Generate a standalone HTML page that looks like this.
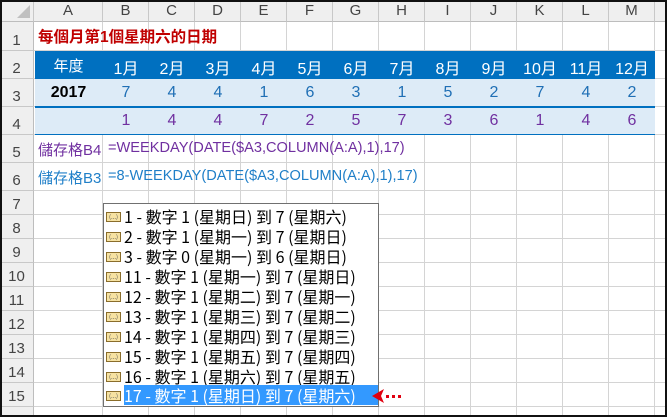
<!DOCTYPE html>
<html><head><meta charset="utf-8"><style>
*{margin:0;padding:0;box-sizing:border-box}
body{width:667px;height:417px;overflow:hidden;background:#fff;font-family:"Liberation Sans","Noto Sans CJK TC",sans-serif;position:relative}
.a{position:absolute}
.vl{position:absolute;top:0;width:1px;background:#d4d4d4;height:417px}
.hl{position:absolute;left:0;height:1px;background:#d4d4d4;width:667px}
.ch{position:absolute;top:0;height:22px;line-height:22px;text-align:center;font-size:15px;color:#444;background:#efefef;border-right:1px solid #c8c8c8;border-bottom:1px solid #bdbdbd}
.rh{position:absolute;left:0;width:34px;text-align:center;font-size:15px;color:#444;background:#efefef;border-right:1px solid #bdbdbd;border-bottom:1px solid #c8c8c8}
.c{position:absolute;width:46px;text-align:center;font-size:16px}
.dd{font-family:"WenQuanYi Zen Hei","Noto Sans CJK TC",sans-serif;font-size:16px;color:#000}
.it{position:absolute;left:2px;height:20px;line-height:20px;white-space:nowrap}
.ic{display:inline-block;width:15px;height:10px;border:1px solid #8a6d2b;background:#f6e2a2;vertical-align:middle;margin-right:3px;margin-top:-3px;font-size:6px;line-height:8px;text-align:center;color:#555}
</style></head><body>
<div class="vl" style="left:102px"></div><div class="vl" style="left:148px"></div><div class="vl" style="left:194px"></div><div class="vl" style="left:240px"></div><div class="vl" style="left:286px"></div><div class="vl" style="left:332px"></div><div class="vl" style="left:378px"></div><div class="vl" style="left:424px"></div><div class="vl" style="left:470px"></div><div class="vl" style="left:516px"></div><div class="vl" style="left:562px"></div><div class="vl" style="left:608px"></div><div class="vl" style="left:654px"></div>
<div class="hl" style="top:50px"></div><div class="hl" style="top:78px"></div><div class="hl" style="top:106px"></div><div class="hl" style="top:134px"></div><div class="hl" style="top:162px"></div><div class="hl" style="top:190px"></div><div class="hl" style="top:214px"></div><div class="hl" style="top:238px"></div><div class="hl" style="top:262px"></div><div class="hl" style="top:286px"></div><div class="hl" style="top:310px"></div><div class="hl" style="top:334px"></div><div class="hl" style="top:358px"></div><div class="hl" style="top:382px"></div><div class="hl" style="top:406px"></div>
<div class="ch" style="left:0;width:34px"><div class="a" style="right:3px;bottom:3px;width:0;height:0;border-left:13px solid transparent;border-bottom:13px solid #c0c0c0"></div></div>
<div class="ch" style="left:34px;width:69px">A</div>
<div class="ch" style="left:103px;width:46px">B</div><div class="ch" style="left:149px;width:46px">C</div><div class="ch" style="left:195px;width:46px">D</div><div class="ch" style="left:241px;width:46px">E</div><div class="ch" style="left:287px;width:46px">F</div><div class="ch" style="left:333px;width:46px">G</div><div class="ch" style="left:379px;width:46px">H</div><div class="ch" style="left:425px;width:46px">I</div><div class="ch" style="left:471px;width:46px">J</div><div class="ch" style="left:517px;width:46px">K</div><div class="ch" style="left:563px;width:46px">L</div><div class="ch" style="left:609px;width:46px">M</div><div class="ch" style="left:655px;width:12px"></div>
<div class="rh" style="top:22px;height:29px;line-height:38px">1</div>
<div class="rh" style="top:51px;height:28px;line-height:36px">2</div>
<div class="rh" style="top:79px;height:28px;line-height:36px">3</div>
<div class="rh" style="top:107px;height:28px;line-height:36px">4</div>
<div class="rh" style="top:135px;height:28px;line-height:36px">5</div>
<div class="rh" style="top:163px;height:28px;line-height:36px">6</div>
<div class="rh" style="top:191px;height:24px;line-height:28px">7</div>
<div class="rh" style="top:215px;height:24px;line-height:28px">8</div>
<div class="rh" style="top:239px;height:24px;line-height:28px">9</div>
<div class="rh" style="top:263px;height:24px;line-height:28px">10</div>
<div class="rh" style="top:287px;height:24px;line-height:28px">11</div>
<div class="rh" style="top:311px;height:24px;line-height:28px">12</div>
<div class="rh" style="top:335px;height:24px;line-height:28px">13</div>
<div class="rh" style="top:359px;height:24px;line-height:28px">14</div>
<div class="rh" style="top:383px;height:24px;line-height:28px">15</div>
<div class="rh" style="top:407px;height:10px"></div>
<div class="a" style="left:38px;top:25px;font-size:15.5px;font-weight:bold;color:#c00000">每個月第1個星期六的日期</div>
<div class="a" style="left:35px;top:51px;width:620px;height:28px;background:#0070c0"></div>
<div class="a" style="left:35px;top:79px;width:620px;height:56px;background:#ddebf7"></div>
<div class="a" style="left:35px;top:106px;width:620px;height:2px;background:#0070c0"></div>
<div class="a" style="left:35px;top:134px;width:620px;height:1px;background:#0070c0"></div>
<div class="a" style="left:34px;top:55px;width:69px;text-align:center;color:#fff;font-size:15px">年度</div>
<div class="a" style="left:34px;top:84px;width:69px;text-align:center;color:#000;font-size:16px;font-weight:bold">2017</div>
<div class="c" style="left:103px;top:55px;color:#fff">1月</div><div class="c" style="left:149px;top:55px;color:#fff">2月</div><div class="c" style="left:195px;top:55px;color:#fff">3月</div><div class="c" style="left:241px;top:55px;color:#fff">4月</div><div class="c" style="left:287px;top:55px;color:#fff">5月</div><div class="c" style="left:333px;top:55px;color:#fff">6月</div><div class="c" style="left:379px;top:55px;color:#fff">7月</div><div class="c" style="left:425px;top:55px;color:#fff">8月</div><div class="c" style="left:471px;top:55px;color:#fff">9月</div><div class="c" style="left:517px;top:55px;color:#fff">10月</div><div class="c" style="left:563px;top:55px;color:#fff">11月</div><div class="c" style="left:609px;top:55px;color:#fff">12月</div>
<div class="c" style="left:103px;top:84px;color:#1f6fb5">7</div><div class="c" style="left:149px;top:84px;color:#1f6fb5">4</div><div class="c" style="left:195px;top:84px;color:#1f6fb5">4</div><div class="c" style="left:241px;top:84px;color:#1f6fb5">1</div><div class="c" style="left:287px;top:84px;color:#1f6fb5">6</div><div class="c" style="left:333px;top:84px;color:#1f6fb5">3</div><div class="c" style="left:379px;top:84px;color:#1f6fb5">1</div><div class="c" style="left:425px;top:84px;color:#1f6fb5">5</div><div class="c" style="left:471px;top:84px;color:#1f6fb5">2</div><div class="c" style="left:517px;top:84px;color:#1f6fb5">7</div><div class="c" style="left:563px;top:84px;color:#1f6fb5">4</div><div class="c" style="left:609px;top:84px;color:#1f6fb5">2</div>
<div class="c" style="left:103px;top:112px;color:#7030a0">1</div><div class="c" style="left:149px;top:112px;color:#7030a0">4</div><div class="c" style="left:195px;top:112px;color:#7030a0">4</div><div class="c" style="left:241px;top:112px;color:#7030a0">7</div><div class="c" style="left:287px;top:112px;color:#7030a0">2</div><div class="c" style="left:333px;top:112px;color:#7030a0">5</div><div class="c" style="left:379px;top:112px;color:#7030a0">7</div><div class="c" style="left:425px;top:112px;color:#7030a0">3</div><div class="c" style="left:471px;top:112px;color:#7030a0">6</div><div class="c" style="left:517px;top:112px;color:#7030a0">1</div><div class="c" style="left:563px;top:112px;color:#7030a0">4</div><div class="c" style="left:609px;top:112px;color:#7030a0">6</div>
<div class="a" style="left:38px;top:139px;font-size:15px;color:#7030a0">儲存格B4</div>
<div class="a" style="left:108px;top:140px;font-size:14.6px;color:#7030a0;white-space:nowrap">=WEEKDAY(DATE($A3,COLUMN(A:A),1),17)</div>
<div class="a" style="left:38px;top:167px;font-size:15px;color:#1f7fc8">儲存格B3</div>
<div class="a" style="left:108px;top:168px;font-size:14.6px;color:#1f7fc8;white-space:nowrap">=8-WEEKDAY(DATE($A3,COLUMN(A:A),1),17)</div>
<div class="a dd" style="left:103px;top:203px;width:276px;height:204px;background:#fff;border:1px solid #707070">
<div class="it" style="top:2px"><span class="ic">(...)</span>1 - 數字 1 (星期日) 到 7 (星期六)</div>
<div class="it" style="top:22px"><span class="ic">(...)</span>2 - 數字 1 (星期一) 到 7 (星期日)</div>
<div class="it" style="top:42px"><span class="ic">(...)</span>3 - 數字 0 (星期一) 到 6 (星期日)</div>
<div class="it" style="top:62px"><span class="ic">(...)</span>11 - 數字 1 (星期一) 到 7 (星期日)</div>
<div class="it" style="top:82px"><span class="ic">(...)</span>12 - 數字 1 (星期二) 到 7 (星期一)</div>
<div class="it" style="top:102px"><span class="ic">(...)</span>13 - 數字 1 (星期三) 到 7 (星期二)</div>
<div class="it" style="top:122px"><span class="ic">(...)</span>14 - 數字 1 (星期四) 到 7 (星期三)</div>
<div class="it" style="top:142px"><span class="ic">(...)</span>15 - 數字 1 (星期五) 到 7 (星期四)</div>
<div class="it" style="top:162px"><span class="ic">(...)</span>16 - 數字 1 (星期六) 到 7 (星期五)</div>
<div class="a" style="left:20px;top:181px;width:254px;height:20px;background:#3399ff"></div>
<div class="it" style="top:181px"><span class="ic">(...)</span><span style="color:#fff">17 - 數字 1 (星期日) 到 7 (星期六)</span></div>
</div>
<svg class="a" style="left:370px;top:388px" width="36" height="18"><path d="M2 8 L14 1 L11 8 L14 15 Z" fill="#e00010"/><rect x="16" y="7" width="3" height="3" fill="#e00010"/><rect x="22" y="7" width="3" height="3" fill="#e00010"/><rect x="28" y="7" width="3" height="3" fill="#e00010"/></svg>
<div class="a" style="left:0;top:0;width:667px;height:417px;border:2px solid #111"></div>
</body></html>
